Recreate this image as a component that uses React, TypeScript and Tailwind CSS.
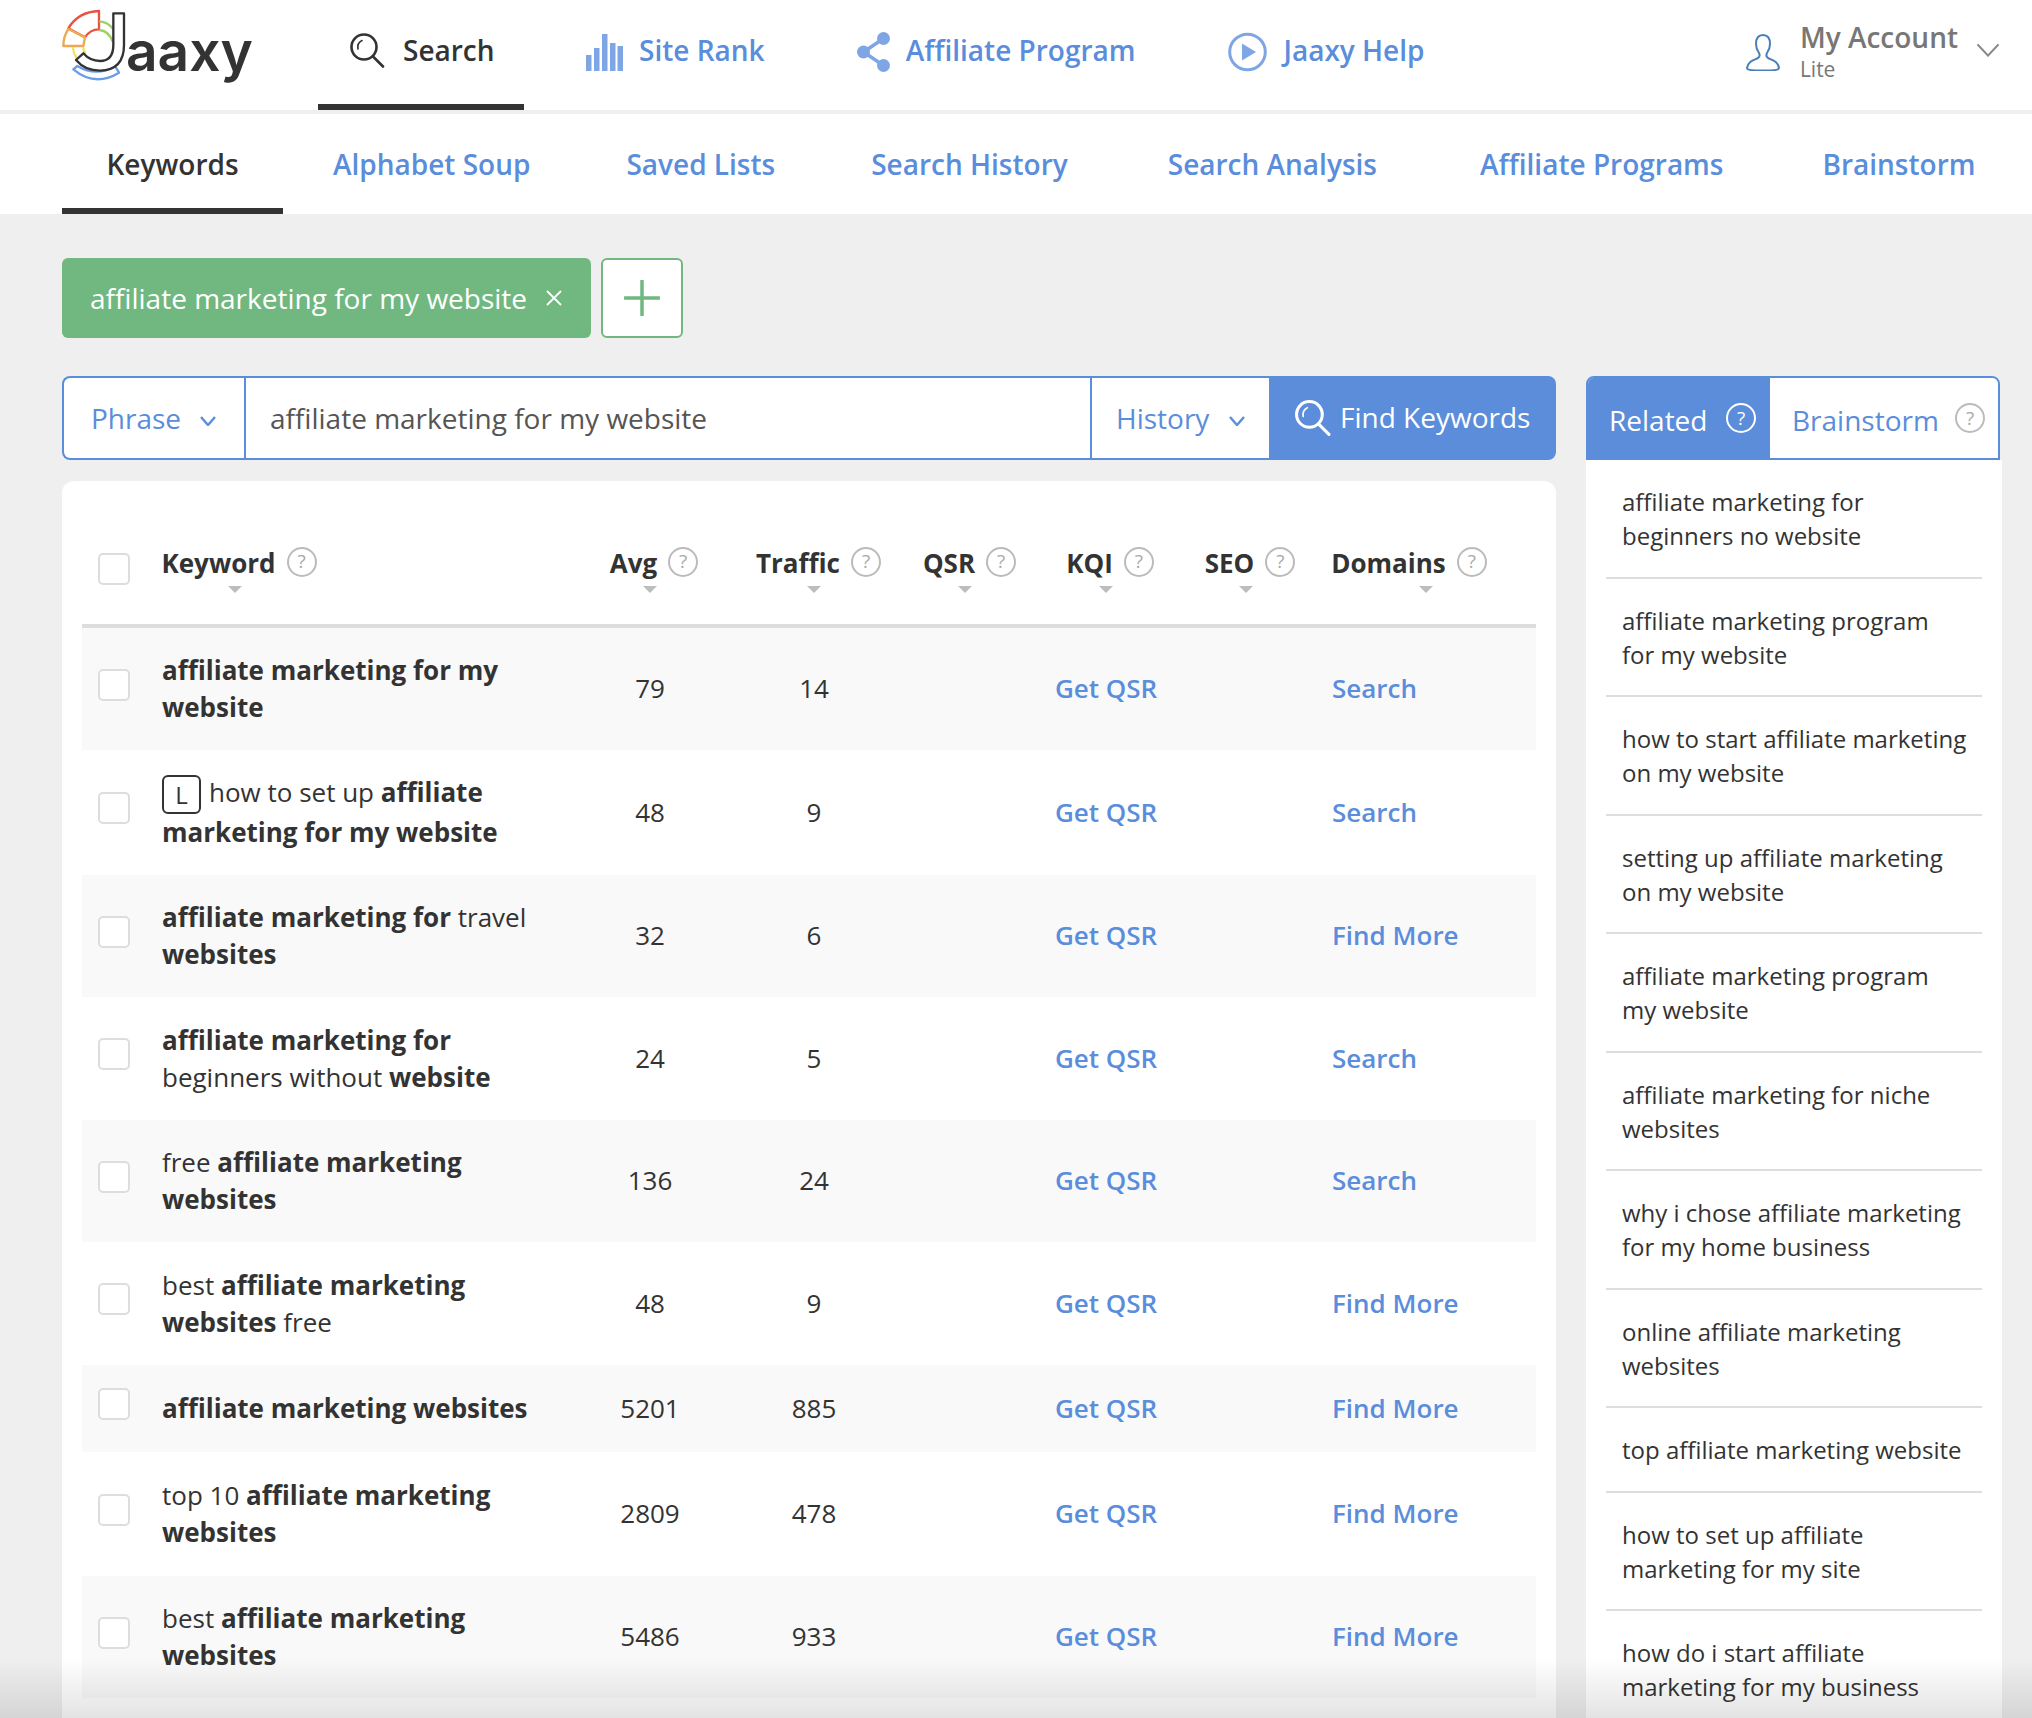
import React from "react";

const Q = ({ light = false, className = "" }: { light?: boolean; className?: string }) => (
  <span
    className={`inline-flex h-[30px] w-[30px] shrink-0 items-center justify-center rounded-full border-2 text-[19px] font-normal leading-none ${
      light ? "border-white text-white" : "border-[#bbbbbb] text-[#aaaaaa]"
    } ${className}`}
  >
    ?
  </span>
);

const Caret = () => (
  <span className="block h-0 w-0 border-x-[7px] border-t-[7px] border-x-transparent border-t-[#bdbdbd]" />
);

const SearchIcon = ({ color, size, sw = 2.6 }: { color: string; size: number; sw?: number }) => (
  <svg width={size} height={size} viewBox="0 0 36 36" fill="none" stroke={color} strokeWidth={sw} strokeLinecap="round">
    <circle cx="15" cy="15" r="12.5" />
    <path d="M24 24.5 34 34.5" />
    <path d="M9 17c-.8-4 1-7 4-8.500" strokeWidth="1.6" />
  </svg>
);

const Chevron = ({ color, w = 16, h = 10, sw = 2.4 }: { color: string; w?: number; h?: number; sw?: number }) => (
  <svg width={w} height={h} viewBox="0 0 16 10" fill="none" stroke={color} strokeWidth={sw} preserveAspectRatio="none">
    <path d="M1 1l7 8 7-8" />
  </svg>
);

const Logo = () => (
  <div className="flex items-start">
    <svg width="66" height="100" viewBox="36 0 198 300" fill="none" strokeWidth="7" className="shrink-0">
      <path d="M147 33V88Q120 88 105 112L55 85Q85 35 147 33Z" stroke="#e8533f" strokeLinejoin="round" />
      <path d="M55 87 105 112 100 138H40Q40 110 55 87Z" stroke="#eda850" strokeLinejoin="round" />
      <path d="M68 141Q70 160 82 178M100 141Q100 152 106 162" stroke="#f0e35c" />
      <path d="M148 64Q174 66 188 86M148 90Q176 92 188 125" stroke="#9ad35f" />
      <path d="M70 208 82 198Q140 232 195 198L207 218Q135 262 70 208Z" stroke="#6b9de8" strokeLinejoin="round" />
      <path d="M190 40H222V135Q222 210 150 212Q105 212 78 180L100 160Q120 183 150 183Q190 183 190 135Z" stroke="#333333" fill="#ffffff" strokeLinejoin="round" />
    </svg>
    <span className="-ml-[2px] mt-[16px] font-['Inter',sans-serif] text-[55px] font-semibold leading-[70px] text-[#333333]">aaxy</span>
  </div>
);

const Header = () => (
  <header className="flex h-[110px] items-start bg-white pl-[62px] text-[28px] font-semibold text-[#5a8ddb]">
    <div className="w-[256px] shrink-0">
      <Logo />
    </div>
    <div className="flex h-[110px] w-[206px] shrink-0 items-center gap-[18px] border-b-[6px] border-[#333333] pb-[4px] pl-[31px] text-[#333333]">
      <SearchIcon color="#333333" size={36} />
      <span>Search</span>
    </div>
    <div className="ml-[62px] flex h-[100px] items-center gap-[16px]">
      <svg width="37" height="37" viewBox="0 0 37 37" fill="#7ea6e4" className="mt-[4px]">
        <rect x="0" y="21" width="5.500" height="16" />
        <rect x="8" y="14" width="5.500" height="23" />
        <rect x="16" y="0" width="5.500" height="37" />
        <rect x="24" y="9" width="5.500" height="28" />
        <rect x="31.500" y="12" width="5.500" height="25" />
      </svg>
      <span>Site Rank</span>
    </div>
    <div className="ml-[92px] flex h-[100px] items-center gap-[16px]">
      <svg width="33" height="40" viewBox="0 0 33 40" className="mt-[4px]">
        <g fill="#7ea6e4">
          <circle cx="26.500" cy="6.500" r="6.500" />
          <circle cx="6.500" cy="20" r="6.500" />
          <circle cx="26.500" cy="33.500" r="6.500" />
        </g>
        <path d="M26.500 6.500 6.500 20 26.500 33.500" stroke="#7ea6e4" strokeWidth="3.500" fill="none" />
      </svg>
      <span>Affiliate Program</span>
    </div>
    <div className="ml-[92px] flex h-[100px] items-center gap-[17px]">
      <svg width="39" height="40" viewBox="0 0 39 40" className="mt-[4px]">
        <circle cx="19.500" cy="20" r="17.800" fill="none" stroke="#7ea6e4" strokeWidth="3" />
        <path d="M14 11.500 28 20 14 28.500Z" fill="#7ea6e4" />
      </svg>
      <span>Jaaxy Help</span>
    </div>
    <div className="ml-auto flex h-[100px] items-center pr-[32px] text-[#777777]">
      <svg width="34" height="37" viewBox="0 0 34 37" fill="none" stroke="#4a7fb8" strokeWidth="2" className="mt-[4px]">
        <path d="M17 1c-5 0-7 4-7 9 0 4 1.500 7 3 9 1 2 .5 4-1 5-4 2-10 3-11 10 0 2 5 2.500 16 2.500s16-.5 16-2.500c-1-7-7-8-11-10-1.500-1-2-3-1-5 1.500-2 3-5 3-9 0-5-2-9-7-9Z" />
      </svg>
      <div className="ml-[20px] flex flex-col">
        <span className="text-[28px] leading-[36px]">My Account</span>
        <span className="mt-[1px] text-[21px] font-medium leading-[26px]">Lite</span>
      </div>
      <span className="ml-[18px]">
        <Chevron color="#888888" w={24} h={14} sw={1.400} />
      </span>
    </div>
  </header>
);

const SubNav = () => (
  <nav className="mt-[4px] flex h-[100px] items-start bg-white pl-[62px] text-[28px] font-semibold leading-[100px] text-[#5a8ddb]">
    <div className="h-[100px] w-[221px] shrink-0 border-b-[6px] border-[#333333] text-center leading-[100px] text-[#333333]">Keywords</div>
    <span className="ml-[50px]">Alphabet Soup</span>
    <span className="ml-[96px]">Saved Lists</span>
    <span className="ml-[96px]">Search History</span>
    <span className="ml-[100px]">Search Analysis</span>
    <span className="ml-[103px]">Affiliate Programs</span>
    <span className="ml-[99px]">Brainstorm</span>
  </nav>
);

const Chips = () => (
  <div className="flex items-stretch gap-[10px]">
    <div className="flex h-[80px] w-[529px] items-center rounded-[6px] bg-[#70b87f] pl-[28px] text-[28px] text-white">
      <span>affiliate marketing for my website</span>
      <svg width="16" height="16" viewBox="0 0 16 16" stroke="#ffffff" strokeWidth="1.800" className="ml-[19px]">
        <path d="M1 1l14 14M15 1 1 15" />
      </svg>
    </div>
    <div className="flex h-[80px] w-[82px] items-center justify-center rounded-[6px] border-2 border-[#70b87f] bg-white">
      <svg width="36" height="36" viewBox="0 0 36 36" stroke="#70b87f" strokeWidth="3.500" strokeLinecap="round">
        <path d="M18 1v34M1 18h34" />
      </svg>
    </div>
  </div>
);

const SearchBar = () => (
  <div className="mt-[38px] flex h-[84px] w-[1494px]">
    <div className="flex h-[84px] flex-1 items-center rounded-l-[8px] border-2 border-r-0 border-[#5a8ddb] bg-white text-[28px]">
      <div className="flex h-full w-[182px] items-center border-r-2 border-[#5a8ddb] pl-[27px] text-[#5a8ddb]">
        <span>Phrase</span>
        <span className="ml-[19px] mt-[5px]"><Chevron color="#5a8ddb" /></span>
      </div>
      <div className="flex h-full flex-1 items-center pb-[1px] pl-[24px] text-[#555555]">affiliate marketing for my website</div>
      <div className="flex h-full w-[179px] items-center border-l-2 border-[#5a8ddb] pl-[24px] text-[#5a8ddb]">
        <span>History</span>
        <span className="ml-[20px] mt-[5px]"><Chevron color="#5a8ddb" /></span>
      </div>
    </div>
    <div className="flex h-[84px] w-[287px] items-center gap-[9px] rounded-r-[8px] bg-[#5b8ddb] pb-[2px] pl-[25px] text-[28px] text-white">
      <SearchIcon color="#ffffff" size={37} sw={3} />
      <span>Find Keywords</span>
    </div>
  </div>
);

type Seg = [string, boolean];
type Row = { segs: Seg[]; avg: string; tr: string; more: string; badge?: boolean; h: string };

const rows: Row[] = [
  { segs: [["affiliate marketing for my website", true]], avg: "79", tr: "14", more: "Search", h: "h-[122px]" },
  { segs: [["how to set up ", false], ["affiliate marketing for my website", true]], avg: "48", tr: "9", more: "Search", badge: true, h: "h-[125px]" },
  { segs: [["affiliate marketing for", true], [" travel ", false], ["websites", true]], avg: "32", tr: "6", more: "Find More", h: "h-[122px]" },
  { segs: [["affiliate marketing for", true], [" beginners without ", false], ["website", true]], avg: "24", tr: "5", more: "Search", h: "h-[123px]" },
  { segs: [["free ", false], ["affiliate marketing websites", true]], avg: "136", tr: "24", more: "Search", h: "h-[122px]" },
  { segs: [["best ", false], ["affiliate marketing websites", true], [" free", false]], avg: "48", tr: "9", more: "Find More", h: "h-[123px]" },
  { segs: [["affiliate marketing websites", true]], avg: "5201", tr: "885", more: "Find More", h: "h-[87px]" },
  { segs: [["top 10 ", false], ["affiliate marketing websites", true]], avg: "2809", tr: "478", more: "Find More", h: "h-[124px]" },
  { segs: [["best ", false], ["affiliate marketing websites", true]], avg: "5486", tr: "933", more: "Find More", h: "h-[122px]" },
];

const gridCols = "grid grid-cols-[80px_400px_176px_152px_150px_132px_160px_1fr] items-center";

const Check = ({ className = "" }: { className?: string }) => (
  <span className={`block h-[32px] w-[32px] rounded-[5px] border-2 border-[#dddddd] bg-white ${className}`} />
);

const HeadCell = ({ label, group = "", caret = "" }: { label: string; group?: string; caret?: string }) => (
  <div className="flex flex-col items-center">
    <div className={`flex items-center gap-[11px] ${group}`}>
      <span className="text-[26px] font-bold leading-[34px] text-[#333333]">{label}</span>
      <Q className="-mt-[3px]" />
    </div>
    <span className={`mt-[6px] ${caret}`}><Caret /></span>
  </div>
);

const Table = () => (
  <div className="mt-[21px] h-[1300px] w-[1494px] rounded-t-[12px] bg-white px-[20px]">
    <div className={`${gridCols} h-[147px] border-b-4 border-[#dddddd] pt-[34px]`}>
      <Check className="ml-[16px] mt-[-2px]" />
      <div className="w-[154px]"><HeadCell label="Keyword" caret="mr-[9px]" /></div>
      <HeadCell label="Avg" group="ml-[8px]" />
      <HeadCell label="Traffic" group="ml-[9px]" />
      <HeadCell label="QSR" group="ml-[9px]" />
      <HeadCell label="KQI" group="ml-[8px]" />
      <HeadCell label="SEO" group="mr-[4px]" caret="mr-[12px]" />
      <div className="w-[154px]"><HeadCell label="Domains" caret="ml-[33px]" /></div>
    </div>
    {rows.map((r, i) => (
      <div key={i} className={`${gridCols} ${r.h} ${i % 2 === 0 ? "bg-[#f9f9f9]" : "bg-white"}`}>
        <Check className="mb-[9px] ml-[16px]" />
        <div className="w-[370px] text-[26px] leading-[37px] text-[#333333]">
          {r.badge && (
            <span className="mr-[8px] inline-flex h-[39px] w-[39px] items-center justify-center rounded-[6px] border-2 border-[#333333] align-middle text-[24px] leading-none">L</span>
          )}
          {r.segs.map((s, j) => (
            <span key={j} className={s[1] ? "font-bold" : ""}>{s[0]}</span>
          ))}
        </div>
        <div className="pb-[1px] text-center text-[26px] text-[#333333]">{r.avg}</div>
        <div className="pb-[1px] text-center text-[26px] text-[#333333]">{r.tr}</div>
        <div />
        <div className="pb-[1px] text-center text-[26px] font-semibold text-[#5a8ddb]">Get QSR</div>
        <div />
        <div className="pb-[1px] text-[26px] font-semibold text-[#5a8ddb]">{r.more}</div>
      </div>
    ))}
  </div>
);

const related = [
  "affiliate marketing for\nbeginners no website",
  "affiliate marketing program\nfor my website",
  "how to start affiliate marketing\non my website",
  "setting up affiliate marketing\non my website",
  "affiliate marketing program\nmy website",
  "affiliate marketing for niche\nwebsites",
  "why i chose affiliate marketing\nfor my home business",
  "online affiliate marketing\nwebsites",
  "top affiliate marketing website",
  "how to set up affiliate\nmarketing for my site",
  "how do i start affiliate\nmarketing for my business",
];

const Sidebar = () => (
  <aside className="ml-[30px] w-[416px] shrink-0">
    <div className="flex h-[84px] w-[414px] overflow-hidden rounded-t-[8px] border-2 border-[#5a8ddb] text-[28px]">
      <div className="flex w-[182px] items-center justify-between bg-[#5b8ddb] pl-[21px] pr-[14px] pt-[3px] text-white">
        <span>Related</span>
        <Q light className="-mt-[3px]" />
      </div>
      <div className="flex flex-1 items-center justify-between bg-white pl-[22px] pr-[13px] pt-[3px] text-[#5a8ddb]">
        <span>Brainstorm</span>
        <Q className="-mt-[3px]" />
      </div>
    </div>
    <div className="bg-white px-[20px]">
      {related.map((t, i) => (
        <div key={i} className="whitespace-pre-line border-b-2 border-[#dddddd] pb-[23.500px] pl-[16px] pt-[25px] text-[24px] leading-[34px] text-[#333333] last:border-b-0">
          {t}
        </div>
      ))}
    </div>
  </aside>
);

export default function App() {
  return (
    <div className="relative h-[1718px] w-[2032px] overflow-hidden bg-[#efefef] font-['Open_Sans',sans-serif]">
      <Header />
      <SubNav />
      <main className="px-[62px] pt-[44px]">
        <Chips />
        <div className="flex items-start">
          <div className="shrink-0">
            <SearchBar />
            <Table />
          </div>
          <div className="mt-[38px]">
            <Sidebar />
          </div>
        </div>
      </main>
      <div className="pointer-events-none absolute inset-x-0 bottom-0 h-[60px] bg-gradient-to-b from-transparent to-[#0000001c]" />
    </div>
  );
}
